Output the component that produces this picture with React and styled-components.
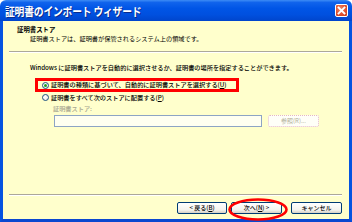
import React from "react";
import styled, { createGlobalStyle } from "styled-components";

const Global = createGlobalStyle`
  html, body { margin: 0; padding: 0; background: #ffffff; }
  body { font-family: "Noto Sans CJK JP", "Noto Sans", sans-serif; }
  * { box-sizing: border-box; }
`;

const Window = styled.div`
  width: 352px;
  height: 222px;
  display: flex;
  flex-direction: column;
  overflow: hidden;
`;

const TitleBar = styled.div`
  height: 21px;
  flex: none;
  display: flex;
  align-items: center;
  justify-content: space-between;
  padding: 0 4px 0 5px;
  background: linear-gradient(to bottom, #3d8cf5 0%, #1063ec 12%, #0055e6 40%, #0050df 70%, #0045cc 100%);
  border-radius: 6px 6px 0 0;
`;

const Title = styled.div`
  color: #ffffff;
  font-family: "Noto Sans CJK JP", sans-serif;
  font-size: 9.8px;
  font-weight: 700;
  letter-spacing: -0.2px;
  text-shadow: 1px 1px 0 #0a2a8a;
  line-height: 12px;
  transform: scaleY(1.2);
  transform-origin: left center;
`;

const CloseButton = styled.div`
  width: 13px;
  height: 13px;
  border: 1px solid #ffffff;
  border-radius: 2px;
  background: radial-gradient(circle at 40% 35%, #f08a6c 0%, #e0502f 55%, #c23a1d 100%);
  display: flex;
  align-items: center;
  justify-content: center;
`;

const Body = styled.div`
  flex: 1;
  display: flex;
  flex-direction: column;
  background: #ffffcc;
  border-left: 3px solid #0553e0;
  border-right: 3px solid #0553e0;
  border-bottom: 3px solid #0a48d0;
`;

const Header = styled.div`
  padding: 5px 0 0 14px;
  height: 30px;
  flex: none;
`;

const HeaderTitle = styled.div`
  font-size: 6.4px;
  font-weight: 700;
  line-height: 8px;
  color: #000000;
`;

const HeaderSub = styled.div`
  font-size: 6.2px;
  line-height: 8px;
  color: #000000;
  padding-left: 13px;
  margin-top: 1px;
`;

const Separator = styled.div`
  flex: none;
  height: 2px;
  margin: 0 7px 0 6px;
  border-top: 1px solid #aca899;
  border-bottom: 1px solid #ffffff;
`;

const Content = styled.div`
  flex: 1;
  padding: 11px 0 0 27px;
  display: flex;
  flex-direction: column;
`;

const Text = styled.div`
  font-size: 6.2px;
  line-height: 8px;
  font-weight: 500;
  color: ${(p) => (p.$disabled ? "#a7a691" : "#000000")};
  white-space: nowrap;
`;

const Highlight = styled.div`
  margin: 6px 0 0 5px;
  width: 204px;
  height: 14px;
  border: 3px solid #ff0000;
  display: flex;
  align-items: center;
  padding-left: 4px;
`;

const RadioRow = styled.div`
  display: flex;
  align-items: center;
  gap: 2px;
  height: 9px;
  margin-left: ${(p) => p.$ml || 0}px;
  margin-top: ${(p) => p.$mt || 0}px;
`;

const Radio = styled.span`
  width: 7px;
  height: 7px;
  flex: none;
  border-radius: 50%;
  border: 1px solid #1c5180;
  background: radial-gradient(circle at 35% 35%, #ffffff 0%, #e8e8e0 100%);
  display: flex;
  align-items: center;
  justify-content: center;
  &::after {
    content: "";
    width: 3px;
    height: 3px;
    border-radius: 50%;
    background: ${(p) => (p.$checked ? "#21a121" : "transparent")};
  }
`;

const Underline = styled.span`
  text-decoration: underline;
`;

const StoreLabel = styled(Text)`
  margin: 3px 0 0 23px;
`;

const InputRow = styled.div`
  display: flex;
  align-items: center;
  gap: 6px;
  margin: 2px 0 0 24px;
`;

const Input = styled.div`
  width: 208px;
  height: 12px;
  border: 1px solid #8da4c4;
  background: #fffff0;
`;

const BrowseButton = styled.div`
  width: 51px;
  height: 12px;
  border: 1px dotted #e4b8c4;
  border-radius: 2px;
  background: #fffff8;
  font-size: 6px;
  line-height: 10px;
  text-align: center;
  color: #b0ae98;
`;

const ButtonRow = styled.div`
  flex: none;
  height: 23px;
  display: flex;
  justify-content: flex-end;
  align-items: flex-start;
  padding: 6px 7px 0 0;
`;

const Button = styled.div`
  position: relative;
  width: ${(p) => p.$w || 50}px;
  height: 12px;
  margin-left: ${(p) => p.$ml || 0}px;
  border: 1px solid #003c74;
  border-radius: 2px;
  background: linear-gradient(to bottom, #ffffff 0%, #f4f3ee 70%, #d6d0c5 100%);
  font-size: 6px;
  line-height: 10px;
  font-weight: 500;
  text-align: center;
  color: #000000;
  white-space: nowrap;
`;

const Ellipse = styled.svg`
  position: absolute;
  left: -4px;
  top: -5px;
  width: 60px;
  height: 23px;
  overflow: visible;
  pointer-events: none;
`;

export default function App() {
  return (
    <>
      <Global />
      <Window>
        <TitleBar>
          <Title>証明書のインポート ウィザード</Title>
          <CloseButton>
            <svg width="9" height="9" viewBox="0 0 9 9">
              <path d="M1.5 1.5 L7.5 7.5 M7.5 1.5 L1.5 7.5" stroke="#ffffff" strokeWidth="1.8" strokeLinecap="square" />
            </svg>
          </CloseButton>
        </TitleBar>
        <Body>
          <Header>
            <HeaderTitle>証明書ストア</HeaderTitle>
            <HeaderSub>証明書ストアは、証明書が保管されるシステム上の領域です。</HeaderSub>
          </Header>
          <Separator />
          <Content>
            <Text>Windows に証明書ストアを自動的に選択させるか、証明書の場所を指定することができます。</Text>
            <Highlight>
              <RadioRow>
                <Radio $checked />
                <Text>
                  証明書の種類に基づいて、自動的に証明書ストアを選択する(<Underline>U</Underline>)
                </Text>
              </RadioRow>
            </Highlight>
            <RadioRow $ml={12} $mt={1}>
              <Radio />
              <Text>
                証明書をすべて次のストアに配置する(<Underline>P</Underline>)
              </Text>
            </RadioRow>
            <StoreLabel $disabled>証明書ストア:</StoreLabel>
            <InputRow>
              <Input />
              <BrowseButton>参照(R)...</BrowseButton>
            </InputRow>
          </Content>
          <Separator />
          <ButtonRow>
            <Button $w={50}>
              &lt; 戻る(<Underline>B</Underline>)
            </Button>
            <Button $w={51} $ml={4}>
              次へ(<Underline>N</Underline>) &gt;
              <Ellipse viewBox="0 0 60 23">
                <ellipse cx="30" cy="11.5" rx="28.5" ry="10" fill="none" stroke="#ff0000" strokeWidth="2.6" />
              </Ellipse>
            </Button>
            <Button $w={51} $ml={9}>キャンセル</Button>
          </ButtonRow>
        </Body>
      </Window>
    </>
  );
}
